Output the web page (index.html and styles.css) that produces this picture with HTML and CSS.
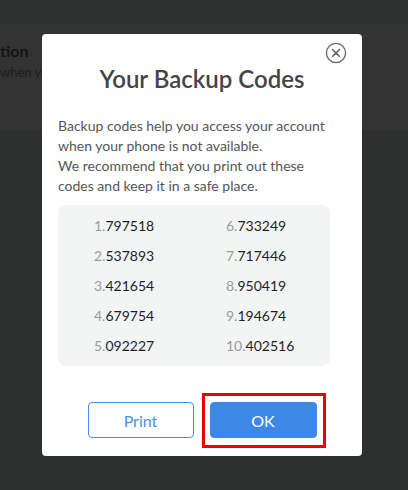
FILE: index.html
```html
<!DOCTYPE html>
<html lang="en">
<head>
<meta charset="utf-8">
<title>Your Backup Codes</title>
<link rel="stylesheet" href="styles.css">
</head>
<body>
<div class="page">
  <div class="topbar"></div>
  <div class="bg-card">
    <div class="bg-title">tion</div>
    <div class="bg-sub">when you</div>
  </div>
</div>

<div class="modal">
  <button class="close" aria-label="Close">
    <svg width="22" height="22" viewBox="0 0 22 22">
      <circle cx="11" cy="11" r="9.6" fill="none" stroke="#6b6e70" stroke-width="1.4"/>
      <path d="M7.6 7.6 L14.4 14.4 M14.4 7.6 L7.6 14.4" stroke="#6b6e70" stroke-width="1.6" stroke-linecap="round"/>
    </svg>
  </button>
  <h1 class="title">Your Backup Codes</h1>
  <p class="desc">Backup codes help you access your account when your phone is not available.<br>We recommend that you print out these codes and keep it in a safe place.</p>
  <div class="codes">
    <div class="code"><span class="num">1.</span>797518</div>
    <div class="code"><span class="num">2.</span>537893</div>
    <div class="code"><span class="num">3.</span>421654</div>
    <div class="code"><span class="num">4.</span>679754</div>
    <div class="code"><span class="num">5.</span>092227</div>
    <div class="code"><span class="num">6.</span>733249</div>
    <div class="code"><span class="num">7.</span>717446</div>
    <div class="code"><span class="num">8.</span>950419</div>
    <div class="code"><span class="num">9.</span>194674</div>
    <div class="code"><span class="num">10.</span>402516</div>
  </div>
  <div class="actions">
    <button class="btn btn-outline">Print</button>
    <button class="btn btn-primary highlight">OK</button>
  </div>
</div>
</body>
</html>
```

FILE: styles.css
```css
* { box-sizing: border-box; }
html, body { margin: 0; padding: 0; }
body {
  background: #2e3030;
  font-family: Lato, "Open Sans", Arial, sans-serif;
  width: 408px;
  height: 490px;
  overflow: hidden;
  position: relative;
}
.topbar {
  height: 23px;
  background: #2f3030;
}
.bg-card {
  height: 107px;
  background: #333333;
  padding-top: 17px;
}
.bg-title {
  font-size: 16px;
  font-weight: 700;
  color: #141414;
  line-height: 22px;
}
.bg-sub {
  font-size: 13px;
  color: #1e1e1e;
  line-height: 18px;
  margin-top: 1px;
}
.modal {
  position: absolute;
  left: 42px;
  top: 34px;
  width: 320px;
  background: #ffffff;
  border-radius: 4px;
  padding: 29px 32px 18px 16px;
}
.close {
  position: absolute;
  top: 8px;
  right: 15px;
  width: 22px;
  height: 22px;
  padding: 0;
  border: 0;
  background: none;
  display: flex;
}
.title {
  margin: 0 0 0 16px;
  text-align: center;
  font-size: 24px;
  font-weight: 600;
  line-height: 32px;
  color: #444546;
}
.desc {
  margin: 21px 0 0;
  font-size: 14px;
  line-height: 20px;
  color: #555657;
}
.codes {
  margin-top: 9px;
  background: #f3f4f4;
  border-radius: 8px;
  padding: 6px 0 5px 36px;
  display: grid;
  grid-template-columns: 132px 1fr;
  grid-template-rows: repeat(5, 30px);
  grid-auto-flow: column;
}
.code {
  font-size: 14px;
  line-height: 30px;
  color: #1f1f1f;
}
.num { color: #9a9b9c; }
.actions {
  margin: 36px 0 0 16px;
  display: flex;
  justify-content: center;
  gap: 16px;
}
.btn {
  width: 106px;
  height: 36px;
  border-radius: 4px;
  font-family: Lato, "Open Sans", Arial, sans-serif;
  font-size: 16px;
  padding: 0;
  cursor: pointer;
}
.btn-outline {
  background: #ffffff;
  border: 1px solid #4a8fe2;
  color: #4a8fe2;
}
.btn-primary {
  width: 107px;
  background: #3d87e6;
  border: 1px solid #3d87e6;
  color: #ffffff;
}
.highlight {
  position: relative;
}
.highlight::after {
  content: "";
  position: absolute;
  left: -9px;
  right: -10px;
  top: -10px;
  bottom: -11px;
  border: 3px solid #ee0000;
}
```
